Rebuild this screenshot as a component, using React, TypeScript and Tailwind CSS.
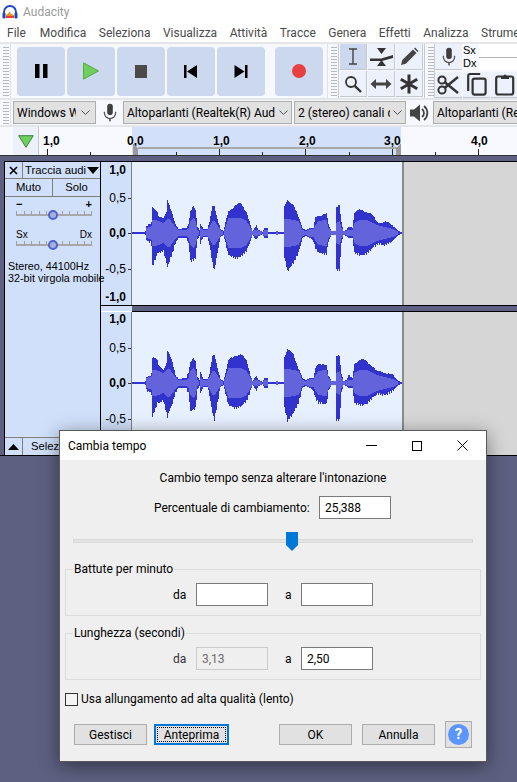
import React from "react";

const KEY: number[][] = [
  [132,0.5,0.5,0.5],[144,0.5,0.5,0.5],[145,2,2,1],[146,7,7,5],[150,8,9,6],[151,10,12,7],[152,25,33,13],[155,24,26,13],[157,22,20,12],[158,18,20,12],[163,14,18,10],[166,20,30,13],[167,32,34,14],[169,28,28,14],[172,20,20,10],[175,9,10,6],[178,4,5,3],[186,5,5,3],[188,10,10,5],[190,22,28,12],[193,26,27,15],[195,22,25,12],[197,6,6,3],[199,3,3,1],[200,10,10,5],[203,4,4,3],[207,4,4,3],[209,10,12,6],[212,27,30,12],[214,27,37,12],[217,15,20,8],[220,4,4,3],[223,2,2,1],[225,10,10,6],[228,22,22,15],[235,28,25,15],[240,29,24,15],[246,22,18,12],[250,8,8,5],[252,2,2,2],[256,7,7,3],[258,3,3,2],[262,1,1,1],[264,5,5,3],[267,5,5,3],[268,1,1,1],[275,1,1,1],[276,2,2,2],[278,1,1,1],[283,1,1,1],[284,26,24,14],[287,33,38,14],[293,29,30,13],[298,15,20,12],[302,5,5,3],[305,3,3,2],[310,5,5,4],[313,5,8,4],[315,15,15,8],[318,18,20,12],[326,19,21,13],[328,8,8,5],[331,2,2,2],[335,2,2,2],[336,27,37,10],[339,28,37,12],[341,10,10,5],[343,2,2,2],[346,3,3,2],[348,7,5,3],[352,5,5,3],[354,20,20,10],[360,23,22,13],[366,22,21,13],[372,17,15,10],[377,11,11,8],[384,11,12,6],[392,8,8,4],[398,2,2,1],[402,0.5,0.5,0.5],
];

function env(x: number) {
  for (let i = 0; i < KEY.length - 1; i++) {
    const a = KEY[i];
    const b = KEY[i + 1];
    if (x >= a[0] && x <= b[0]) {
      const t = (x - a[0]) / (b[0] - a[0] || 1);
      return [a[1] + (b[1] - a[1]) * t, a[2] + (b[2] - a[2]) * t, a[3] + (b[3] - a[3]) * t];
    }
  }
  return [0.5, 0.5, 0.5];
}

function Wave({ height, center, seed }: { height: number; center: number; seed: number }) {
  const bars: React.ReactNode[] = [];
  for (let x = 132; x < 402; x++) {
    const [u, d, r] = env(x);
    const j1 = u > 6 ? Math.round(Math.sin(x * 12.9898 + seed)) : 0;
    const j2 = d > 6 ? Math.round(Math.sin(x * 78.233 + seed)) : 0;
    const up = Math.max(0.5, Math.round(u) + j1);
    const dn = Math.max(0.5, Math.round(d) + j2);
    bars.push(<rect key={"p" + x} x={x - 132} y={center - up} width={1} height={up + dn} fill="#3232cc" />);
    if (r > 1) {
      const rr = Math.round(r);
      bars.push(<rect key={"r" + x} x={x - 132} y={center - rr} width={1} height={rr * 2} fill="#6363dc" />);
    }
  }
  return (
    <svg width="270" height={height} shapeRendering="crispEdges" className="block">
      {bars}
    </svg>
  );
}

function Grip({ h }: { h: string }) {
  return <div className={`w-[6px] ml-[3px] shrink-0 bg-[repeating-linear-gradient(0deg,#b4b8bc_0,#b4b8bc_1px,transparent_1px,transparent_3px)] ${h}`} />;
}

function Transport({ children, ml }: { children: React.ReactNode; ml: string }) {
  return <div className={`w-[48px] h-[49px] shrink-0 rounded-[4px] bg-[#cbd8ee] flex items-center justify-center ${ml}`}>{children}</div>;
}

function Tool({ children, active }: { children: React.ReactNode; active?: boolean }) {
  return (
    <div className={`w-[27px] h-[26px] flex items-center justify-center border-b border-r border-[#c4c8d0] ${active ? "bg-[#cbd8ee]" : "bg-[#ecf1fb]"}`}>
      {children}
    </div>
  );
}

function Chevron() {
  return (
    <svg width="9" height="5" viewBox="0 0 9 5" className="shrink-0">
      <path d="M0.5 0.5L4.5 4.5L8.5 0.5" fill="none" stroke="#555" strokeWidth="1" />
    </svg>
  );
}

function Sel({ w, text, textW }: { w: string; text: string; textW: string }) {
  return (
    <div className={`h-[23px] bg-[#e1e1e1] border border-[#adadad] flex items-center pl-[3px] ${w}`}>
      <div className={`overflow-hidden whitespace-nowrap text-[12px] text-black ${textW}`}>{text}</div>
      <div className="flex-1 flex justify-center"><Chevron /></div>
    </div>
  );
}

function Mic({ s = 20 }: { s?: number }) {
  return (
    <svg width={s} height={s * 1.2} viewBox="0 0 20 24">
      <rect x="6.5" y="1" width="7" height="14" rx="3.5" fill="#3f3f3f" />
      <path d="M3 11v1.5a7 7 0 0 0 14 0V11" fill="none" stroke="#555" strokeWidth="1.6" />
      <rect x="9" y="19" width="2" height="4" fill="#555" />
    </svg>
  );
}

function RulerLabel({ t, bold, mt, tick = true }: { t: string; bold?: boolean; mt: string; tick?: boolean }) {
  return (
    <div className={`h-[14px] flex items-center justify-end text-[12px] leading-[14px] text-black ${mt} ${bold ? "font-bold" : ""}`}>
      <span>{t}</span>
      <span className={`w-[3px] h-[1px] ml-[2px] ${tick ? "bg-[#333]" : ""}`} />
    </div>
  );
}

function SmallSlider({ left, right, labelClass, mt }: { left: string; right: string; labelClass: string; mt: string }) {
  return (
    <div className={`w-[76px] ml-[11px] ${mt}`}>
      <div className={`flex justify-between h-[11px] leading-[11px] text-black ${labelClass}`}>
        <span>{left}</span>
        <span>{right}</span>
      </div>
      <svg width="76" height="10" className="block">
        <rect x="0" y="4" width="76" height="2" fill="#a8a8a8" />
        {[0, 8, 15, 23, 30, 46, 53, 61, 68, 75].map((x) => (
          <rect key={x} x={x} y="1" width="1" height="4" fill="#a0a0a0" />
        ))}
        <circle cx="37" cy="5" r="4" fill="#a9b0d8" stroke="#5060d0" strokeWidth="2" />
      </svg>
    </div>
  );
}

function Input({ value, disabled }: { value?: string; disabled?: boolean }) {
  return (
    <div className={`w-[72px] h-[23px] border flex items-center pl-[5px] text-[12px] ${disabled ? "border-[#cccccc] bg-[#efefef] text-[#6d6d6d]" : "border-[#7a7a7a] bg-white text-black"}`}>
      {value}
    </div>
  );
}

function Btn({ children, focus }: { children: React.ReactNode; focus?: boolean }) {
  if (focus) {
    return (
      <div className="w-[75px] h-[21px] border-2 border-[#0078d7] bg-[#e1e1e1] flex items-center justify-center">
        <div className="w-[69px] h-[15px] border border-dotted border-black flex items-center justify-center text-[12px] text-black">{children}</div>
      </div>
    );
  }
  return <div className="w-[73px] h-[21px] border border-[#adadad] bg-[#e1e1e1] flex items-center justify-center text-[12px] text-black">{children}</div>;
}

function Group({ title, children, pt }: { title: string; children: React.ReactNode; pt: string }) {
  return (
    <div className={`relative ml-[5px] mr-[5px] h-[47px] border border-[#dcdcdc] flex items-center ${pt}`}>
      <span className="absolute left-[7px] top-[-9px] bg-[#efefef] px-[1px] text-[12px] leading-[16px] text-black">{title}</span>
      {children}
    </div>
  );
}

function Track({ height, center, seed, labels }: { height: string; center: number; seed: number; labels: React.ReactNode }) {
  const h = center * 2;
  return (
    <div className={`flex ${height}`}>
      <div className="w-[31px] shrink-0 bg-[#d0e0fa] border-r border-[#808080] font-['Liberation_Sans',sans-serif]">{labels}</div>
      <div className="w-[270px] shrink-0 bg-[#e7f0fe] overflow-hidden">
        <Wave height={h} center={center} seed={seed} />
      </div>
      <div className="w-[2px] shrink-0 bg-[#8c8c8c]" />
      <div className="flex-1 bg-[#d6d6d6]" />
    </div>
  );
}

export default function App() {
  return (
    <div className="relative w-[517px] h-[782px] overflow-hidden bg-[#5d6080] font-['Roboto',sans-serif]">
      {/* window */}
      <div className="h-[456px] flex flex-col bg-white">
        {/* title */}
        <div className="h-[23px] flex items-center pl-[2px]">
          <svg width="16" height="16" viewBox="0 0 16 16">
            <path d="M2 10V8a6 6 0 0 1 12 0v2" fill="none" stroke="#1848c8" strokeWidth="1.8" />
            <rect x="0.5" y="8.5" width="3" height="6" rx="1.2" fill="#1848c8" />
            <rect x="12.5" y="8.5" width="3" height="6" rx="1.2" fill="#1848c8" />
            <path d="M4 14V11l1-1 1 0 1-2 1 0 1 2 1 0 1 1 1 0v3z" fill="#f09018" />
            <path d="M4 14v-2h8v2z" fill="#e8402c" />
          </svg>
          <span className="ml-[5px] text-[12px] text-[#9a9a9a]">Audacity</span>
        </div>
        {/* menu */}
        <div className="h-[19px] flex items-center pl-[7px] gap-[12.5px] text-[12px] whitespace-nowrap text-[#4a4a4a] overflow-hidden">
          {["File", "Modifica", "Seleziona", "Visualizza", "Attività", "Tracce", "Genera", "Effetti", "Analizza"].map((m) => (
            <span key={m} className="first:mr-[1.5px]">{m}</span>
          ))}
          <span className="w-[38px] overflow-hidden">Strumenti</span>
        </div>
        {/* toolbar row 1 */}
        <div className="h-[58px] shrink-0 bg-[#f6f8fd] border-t-2 border-b-2 border-[#e4e6ea] flex items-center overflow-hidden">
          <Grip h="h-[50px]" />
          <div className="w-[1px] h-[54px] ml-[1px] shrink-0 bg-[#dfe2e8]" />
          <Transport ml="ml-[6px]">
            <svg width="13" height="14" viewBox="0 0 13 14"><rect x="0" y="0" width="4.5" height="14" fill="#000" /><rect x="8" y="0" width="4.5" height="14" fill="#000" /></svg>
          </Transport>
          <Transport ml="ml-[2px]">
            <svg width="16" height="18" viewBox="0 0 16 18"><path d="M0.5 0.8L15.5 9L0.5 17.2z" fill="#6fcf5e" stroke="#5aa84c" strokeWidth="1" /></svg>
          </Transport>
          <Transport ml="ml-[2px]">
            <div className="w-[12px] h-[13px] bg-[#4a4a4a]" />
          </Transport>
          <Transport ml="ml-[2px]">
            <svg width="14" height="13" viewBox="0 0 14 13"><rect x="0" y="0" width="2.5" height="13" fill="#000" /><path d="M13 0V13L3 6.5z" fill="#000" /></svg>
          </Transport>
          <Transport ml="ml-[2px]">
            <svg width="14" height="13" viewBox="0 0 14 13"><rect x="11" y="0" width="2.5" height="13" fill="#000" /><path d="M0.5 0V13L10.5 6.5z" fill="#000" /></svg>
          </Transport>
          <Transport ml="ml-[10px]">
            <div className="w-[14px] h-[14px] rounded-full bg-[#e84040]" />
          </Transport>
          <div className="w-[1px] h-[54px] ml-[4px] shrink-0 bg-[#dfe2e8]" />
          <Grip h="h-[50px]" />
          <div className="w-[1px] h-[54px] ml-[1px] mr-[1px] shrink-0 bg-[#c8ccd2]" />
          <div className="grid grid-cols-[27px_27px_27px] grid-rows-[27px_27px] gap-x-[1px] shrink-0">
            <Tool active>
              <svg width="10" height="17" viewBox="0 0 10 17"><path d="M1 1h8M5 1v15M1 16h8" fill="none" stroke="#444" strokeWidth="1.4" /></svg>
            </Tool>
            <Tool>
              <svg width="25" height="20" viewBox="0 0 25 20"><path d="M8 1h9l-4.5 6zM8 19h9l-4.5-6z" fill="#333" /><path d="M1 11.5h11l12-3.5v3l-11 3H1z" fill="#333" /></svg>
            </Tool>
            <Tool>
              <svg width="19" height="19" viewBox="0 0 19 19"><path d="M1 18l1.3-5L13 2.5l3.5 3.5L5.8 16.8zM14 1.5l1-1 3.5 3.5-1 1z" fill="#444" /></svg>
            </Tool>
            <Tool>
              <svg width="18" height="18" viewBox="0 0 18 18"><circle cx="7" cy="7" r="5" fill="none" stroke="#333" strokeWidth="1.8" /><path d="M10.8 10.8L17 17" stroke="#333" strokeWidth="2.4" /></svg>
            </Tool>
            <Tool>
              <svg width="22" height="12" viewBox="0 0 22 12"><path d="M0.5 6L6 1v3.5h10V1l5.5 5L16 11V7.5H6V11z" fill="#444" /></svg>
            </Tool>
            <Tool>
              <svg width="20" height="20" viewBox="0 0 20 20"><path d="M10 0.5v19M1.8 5.2l16.4 9.6M1.8 14.8l16.4-9.6" stroke="#333" strokeWidth="3" /></svg>
            </Tool>
          </div>
          <div className="w-[1px] h-[54px] ml-[1px] shrink-0 bg-[#c8ccd2]" />
          <Grip h="h-[50px]" />
          <div className="w-[1px] h-[54px] shrink-0 bg-[#c8ccd2]" />
          <div className="flex flex-col w-[90px] shrink-0">
            <div className="flex h-[26px] mb-[1px]">
              <div className="w-[27px] h-[26px] bg-[#ecf1fb] flex items-center justify-center border-b border-[#c4c8d0]"><Mic s={16} /></div>
              <div className="ml-[1px] w-[16px] text-[11px] leading-[13px] font-['Liberation_Sans',sans-serif] text-black">
                <div>Sx</div>
                <div>Dx</div>
              </div>
              <div className="flex-1 flex flex-col">
                <div className="h-[13px] bg-white flex justify-end items-center pr-[1px]"><span className="w-[5px] h-[1px] bg-[#555]" /></div>
                <div className="h-[1px] bg-[#b4b4b4]" />
                <div className="h-[12px] bg-white" />
              </div>
            </div>
            <div className="flex h-[26px] gap-[1px] mt-[1px]">
              <div className="w-[27px] bg-[#ecf1fb] flex items-center justify-center border-b border-[#c4c8d0]">
                <svg width="23" height="22" viewBox="0 0 23 22"><circle cx="5" cy="16" r="3.6" fill="none" stroke="#333" strokeWidth="2" /><circle cx="5" cy="6" r="3.6" fill="none" stroke="#333" strokeWidth="2" /><path d="M7.5 8L21 19M7.5 14L21 3" stroke="#333" strokeWidth="2.4" /></svg>
              </div>
              <div className="w-[27px] bg-[#ecf1fb] flex items-center justify-center border-b border-[#c4c8d0]">
                <svg width="20" height="23" viewBox="0 0 20 23"><path d="M1.2 18V3q0-2 2-2h10" fill="none" stroke="#333" strokeWidth="2.2" /><rect x="5.6" y="5.6" width="13" height="16" rx="2" fill="none" stroke="#333" strokeWidth="2.2" /></svg>
              </div>
              <div className="w-[27px] bg-[#ecf1fb] flex items-center justify-center border-b border-[#c4c8d0]">
                <svg width="20" height="23" viewBox="0 0 20 23"><rect x="1.2" y="3.5" width="17" height="18" rx="2" fill="none" stroke="#333" strokeWidth="2.2" /><path d="M6 6V3h2.5a1.5 1.5 0 0 1 3 0H14v3z" fill="#333" /></svg>
              </div>
            </div>
          </div>
        </div>
        {/* toolbar row 2 */}
        <div className="h-[27px] shrink-0 bg-[#f6f8fd] border-b-2 border-[#e4e6ea] flex items-center overflow-hidden">
          <Grip h="h-[22px]" />
          <div className="w-[1px] h-[26px] ml-[1px] shrink-0 bg-[#dfe2e8]" />
          <div className="ml-[2px] shrink-0"><Sel w="w-[83px]" text="Windows WASAPI" textW="w-[59px]" /></div>
          <div className="ml-[6px] w-[16px] flex justify-center shrink-0"><Mic s={16} /></div>
          <div className="ml-[5px] shrink-0"><Sel w="w-[169px]" text="Altoparlanti (Realtek(R) Audio)" textW="w-[148px]" /></div>
          <div className="ml-[2px] shrink-0"><Sel w="w-[112px]" text="2 (stereo) canali di registrazione" textW="w-[92px]" /></div>
          <div className="ml-[3px] w-[22px] shrink-0 flex justify-center">
            <svg width="20" height="18" viewBox="0 0 20 18"><path d="M0 5.5h4L10 0.5v17L4 12.5H0z" fill="#444" /><path d="M12 5a5 5 0 0 1 0 8M14 2a9 9 0 0 1 0 14" fill="none" stroke="#444" strokeWidth="1.8" /></svg>
          </div>
          <div className="ml-[2px] shrink-0"><Sel w="w-[170px]" text="Altoparlanti (Realtek(R) Audio)" textW="w-[148px]" /></div>
        </div>
        {/* timeline */}
        <div className="h-[28px] shrink-0 bg-[#f7f9fe] flex font-['Liberation_Sans',sans-serif] font-bold text-[12px] text-black overflow-hidden">
          <div className="ml-[13px] w-[26px] h-[28px] bg-[#ecf1fb] border-r border-[#c4c8d0] flex items-center justify-center shrink-0">
            <svg width="16" height="13" viewBox="0 0 16 13"><path d="M0.7 0.7H15.3L8 12.3z" fill="#6fcf5e" stroke="#3f7f3f" strokeWidth="1" /></svg>
          </div>
          <div className="flex h-[28px] relative flex-1">
            <div className="absolute left-[93px] top-0 w-[269px] h-[28px] bg-[#d3e0fa]" />
            <div className="relative flex pl-[4px] pt-[7px] leading-[14px] whitespace-nowrap">
              <span className="w-[84px]">1,0</span>
              <span className="w-[86px]">0,0</span>
              <span className="w-[86px]">1,0</span>
              <span className="w-[85px]">2,0</span>
              <span className="w-[87px]">3,0</span>
              <span>4,0</span>
            </div>
            <svg width="478" height="28" className="absolute left-0 top-0" shapeRendering="crispEdges">
              <rect x="99" y="20" width="263" height="2" fill="#a8a8a8" />
              {[8, 51, 94, 137, 180, 223, 266, 310, 353, 396, 439].map((x, i) => (
                <rect key={x} x={x} y={i % 2 ? 25 : 22} width="1" height={i % 2 ? 3 : 6} fill="#222" />
              ))}
              <path d="M94 17l5 4v7h-5z" fill="#9a9a9a" />
              <path d="M362 17l-5 4v7h5z" fill="#9a9a9a" />
            </svg>
          </div>
        </div>
        {/* tracks */}
        <div className="flex-1 bg-[#5d6080] border-t-[1px] border-b-[1px] border-t-[#333] border-b-black pl-[4px] pt-[5px] flex min-h-0 overflow-hidden">
          <div className="w-full h-full border-l border-t border-black flex min-h-0">
            <div className="w-[96px] shrink-0 border-r border-black bg-[#d0e0fa] flex flex-col font-['Liberation_Sans',sans-serif] text-[11.3px] text-black">
              <div className="flex h-[17px] shrink-0 border-b border-[#808080]">
                <div className="w-[18px] border-r border-[#808080] flex items-center justify-center">
                  <svg width="9" height="9" viewBox="0 0 9 9"><path d="M1 1l7 7M8 1l-7 7" stroke="#000" strokeWidth="1.6" /></svg>
                </div>
                <div className="flex-1 flex items-center pl-[2px] whitespace-nowrap overflow-hidden">
                  <span className="w-[61px] overflow-hidden">Traccia audio</span>
                  <svg width="12" height="7" viewBox="0 0 12 7" className="ml-[1px]"><path d="M0 0h12L6 7z" fill="#000" /></svg>
                </div>
              </div>
              <div className="flex h-[18px] shrink-0 border-b border-[#808080]">
                <div className="w-[48px] border-r border-[#808080] flex items-center justify-center">Muto</div>
                <div className="flex-1 flex items-center justify-center">Solo</div>
              </div>
              <SmallSlider mt="mt-[2px]" left="−" right="+" labelClass="text-[11px] font-bold" />
              <SmallSlider mt="mt-[9px]" left="Sx" right="Dx" labelClass="text-[10px]" />
              <div className="relative z-10 mt-[10px] ml-[3px] text-[10.8px] leading-[12px] whitespace-nowrap">
                <div>Stereo, 44100Hz</div>
                <div>32-bit virgola mobile</div>
              </div>
              <div className="flex-1" />
              <div className="flex h-[18px] shrink-0 border-t border-[#808080]">
                <div className="w-[18px] border-r border-[#808080] flex items-center justify-center">
                  <svg width="11" height="6" viewBox="0 0 11 6"><path d="M0 6h11L5.5 0z" fill="#000" /></svg>
                </div>
                <div className="pl-[8px] flex items-center">Seleziona</div>
              </div>
            </div>
            <div className="flex-1 flex flex-col min-w-0">
              <Track
                height="h-[144px] shrink-0 border-b border-black"
                center={71}
                seed={1}
                labels={
                  <>
                    <RulerLabel t="1,0" bold mt="mt-[1px]" tick={false} />
                    <RulerLabel t="0,5" mt="mt-[14px]" />
                    <RulerLabel t="0,0" bold mt="mt-[21px]" />
                    <RulerLabel t="-0,5" mt="mt-[22px]" />
                    <RulerLabel t="-1,0" bold mt="mt-[14px]" tick={false} />
                  </>
                }
              />
              <div className="h-[5px] shrink-0 flex">
                <div className="w-[31px] bg-[#d0e0fa]" />
                <div className="flex-1 bg-[#5d6080]" />
              </div>
              <div className="h-[1px] shrink-0 flex">
                <div className="w-[31px] bg-white" />
                <div className="flex-1 bg-black" />
              </div>
              <Track
                height="flex-1"
                center={71}
                seed={5}
                labels={
                  <>
                    <RulerLabel t="1,0" bold mt="mt-0" tick={false} />
                    <RulerLabel t="0,5" mt="mt-[15px]" />
                    <RulerLabel t="0,0" bold mt="mt-[21px]" />
                    <RulerLabel t="-0,5" mt="mt-[22px]" />
                  </>
                }
              />
            </div>
          </div>
        </div>
      </div>

      {/* dialog */}
      <div className="absolute left-[59px] top-[430px] w-[428px] h-[332px] border border-[#5a5a5a] bg-[#efefef] shadow-[0_4px_18px_rgba(0,0,0,0.45)] flex flex-col text-[12px] text-black">
        <div className="h-[29px] bg-white flex items-center pl-[8px] shrink-0">
          <span>Cambia tempo</span>
          <div className="flex-1" />
          <svg width="11" height="1" className="mr-[35px]"><rect width="11" height="1" fill="#000" /></svg>
          <div className="w-[10px] h-[10px] border border-black mr-[35px]" />
          <svg width="11" height="11" viewBox="0 0 11 11" className="mr-[18px]"><path d="M0.5 0.5l10 10M10.5 0.5l-10 10" stroke="#000" strokeWidth="1" /></svg>
        </div>
        <div className="h-[28px] flex items-end justify-center leading-[16px] pb-[2px] shrink-0">Cambio tempo senza alterare l'intonazione</div>
        <div className="h-[23px] mt-[8px] flex items-center shrink-0">
          <span className="ml-[94px] w-[165px]">Percentuale di cambiamento:</span>
          <Input value="25,388" />
        </div>
        <div className="relative h-[4px] ml-[13px] mr-[13px] mt-[20px] bg-[#e4e4e4] border border-[#d8d8d8] shrink-0">
          <svg width="12" height="19" viewBox="0 0 12 19" className="absolute left-[212px] top-[-8px]">
            <path d="M0 0h12v13l-6 6-6-6z" fill="#0078d7" />
          </svg>
        </div>
        <div className="mt-[26px] shrink-0">
          <Group title="Battute per minuto" pt="pt-[4px]">
            <span className="ml-[107px] w-[23px]">da</span>
            <Input />
            <span className="ml-[17px] w-[16px]">a</span>
            <Input />
          </Group>
        </div>
        <div className="mt-[17px] shrink-0">
          <Group title="Lunghezza (secondi)" pt="pt-[4px]">
            <span className="ml-[107px] w-[23px] text-[#333]">da</span>
            <Input value="3,13" disabled />
            <span className="ml-[17px] w-[16px]">a</span>
            <Input value="2,50" />
          </Group>
        </div>
        <div className="mt-[12px] ml-[5px] flex items-center h-[14px] shrink-0">
          <div className="w-[13px] h-[13px] border border-[#333] bg-[#f4f4f4]" />
          <span className="ml-[3px]">Usa allungamento ad alta qualità (lento)</span>
        </div>
        <div className="mt-[15px] flex items-center h-[27px] shrink-0">
          <div className="ml-[14px]"><Btn>Gestisci</Btn></div>
          <div className="ml-[7px]"><Btn focus>Anteprima</Btn></div>
          <div className="ml-[50px]"><Btn>OK</Btn></div>
          <div className="ml-[10px]"><Btn>Annulla</Btn></div>
          <div className="ml-[10px] w-[27px] h-[27px] border border-[#adadad] bg-[#e1e1e1] flex items-center justify-center">
            <div className="w-[21px] h-[21px] rounded-full bg-[#5b96ff] text-white font-bold text-[15px] leading-[21px] text-center">?</div>
          </div>
        </div>
      </div>
    </div>
  );
}
